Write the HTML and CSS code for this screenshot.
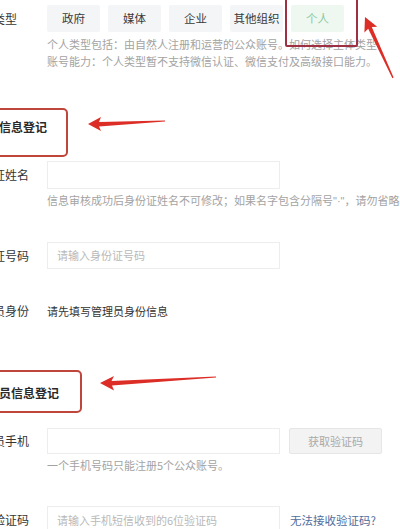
FILE: index.html
```html
<!DOCTYPE html>
<html lang="zh-CN">
<head>
<meta charset="utf-8">
<title>主体信息登记</title>
<link rel="stylesheet" href="styles.css">
</head>
<body>
<div class="page">
  <div class="row type-row">
    <div class="label lh27">主体类型</div>
    <div class="field">
      <div class="options">
        <div class="opt">政府</div>
        <div class="opt">媒体</div>
        <div class="opt">企业</div>
        <div class="opt">其他组织</div>
        <div class="opt on">个人</div>
      </div>
      <div class="hint type-hint">个人类型包括：由自然人注册和运营的公众账号。如何选择主体类型<br>账号能力：个人类型暂不支持微信认证、微信支付及高级接口能力。</div>
    </div>
  </div>

  <div class="heading h1">主体信息登记</div>

  <div class="row name-row">
    <div class="label lh28">身份证姓名</div>
    <div class="field">
      <div class="input h28"></div>
      <div class="hint name-hint">信息审核成功后身份证姓名不可修改；如果名字包含分隔号<span class="narrow">"·"</span>，请勿省略。</div>
    </div>
  </div>

  <div class="row id-row">
    <div class="label lh27">身份证号码</div>
    <div class="field">
      <div class="input h27">请输入身份证号码</div>
    </div>
  </div>

  <div class="row admin-row">
    <div class="label lh20">管理员身份</div>
    <div class="value">请先填写管理员身份信息</div>
  </div>

  <div class="heading h2">管理员信息登记</div>

  <div class="row phone-row">
    <div class="label lh26">管理员手机</div>
    <div class="field">
      <div class="line">
        <div class="input h26"></div>
        <div class="btn">获取验证码</div>
      </div>
      <div class="hint phone-hint">一个手机号码只能注册5个公众账号。</div>
    </div>
  </div>

  <div class="row code-row">
    <div class="label lh28">短信验证码</div>
    <div class="field">
      <div class="line">
        <div class="input h28">请输入手机短信收到的6位验证码</div>
        <div class="link">无法接收验证码?</div>
      </div>
    </div>
  </div>

  <div class="mark-box"></div>
  <svg class="arrows" width="400" height="529" viewBox="0 0 400 529">
    <polygon fill="#dc2e26" points="88,124 101,117 99,122 165,120.4 165,121.6 99,126.5 101,131"/>
    <polygon fill="#dc2e26" points="100,383 114,376 111.5,381 216,376.4 216,377.6 112,385.5 114,390.5"/>
    <polygon fill="#dc2e26" points="365,17 377.2,26.8 371.8,27.1 393.6,77.6 392.4,78.2 368.2,28.7 364.4,32.6"/>
  </svg>
</div>
</body>
</html>
```

FILE: styles.css
```css
html, body {
  margin: 0;
  padding: 0;
  background: #ffffff;
}

.page {
  position: relative;
  width: 400px;
  height: 529px;
  overflow: hidden;
  font-family: "Noto Sans CJK SC", "Noto Sans", sans-serif;
  color: #333;
}

.row {
  display: flex;
  align-items: flex-start;
}

.label {
  flex: none;
  width: 78px;
  margin-left: -31px;
  font-size: 12px;
  color: #353535;
  white-space: nowrap;
}

.lh20 { line-height: 20px; }
.lh26 { line-height: 26px; }
.lh27 { line-height: 27px; }
.lh28 { line-height: 28px; }

.field {
  display: flex;
  flex-direction: column;
}

.type-row { margin-top: 5px; }

.options {
  display: flex;
  gap: 8px;
}

.opt {
  width: 53px;
  height: 27px;
  line-height: 27px;
  text-align: center;
  font-size: 11.5px;
  background: #f4f5f6;
  color: #3a3a3a;
  border-radius: 2px;
}

.opt.on {
  background: #eef7f0;
  color: #88c99c;
}

.hint {
  font-size: 11px;
  line-height: 17px;
  color: #a3a3a3;
  white-space: nowrap;
}

.narrow {
  font-family: "Liberation Sans", sans-serif;
}

.type-hint { margin-top: 4px; }
.name-hint { margin-top: 3px; }
.phone-hint { margin-top: 3px; }

.heading {
  width: fit-content;
  margin-left: -40px;
  padding-left: 13px;
  border: 2px solid #c0463c;
  border-radius: 5px;
  font-size: 12px;
  font-weight: 700;
  line-height: 20px;
  color: #2a2a2a;
  white-space: nowrap;
}

.h1 {
  margin-top: 38px;
  padding-top: 7px;
  padding-bottom: 18px;
  padding-right: 19px;
}

.h2 {
  margin-top: 49px;
  padding-top: 11px;
  padding-bottom: 8px;
  padding-right: 21px;
}

.name-row { margin-top: 4px; }
.id-row { margin-top: 32px; }
.admin-row { margin-top: 32px; }
.phone-row { margin-top: 15px; }
.code-row { margin-top: 32px; }

.input {
  box-sizing: border-box;
  width: 233px;
  border: 1px solid #ededed;
  background: #fff;
  padding-left: 9px;
  font-size: 11px;
  color: #b9b9b9;
  white-space: nowrap;
}

.h26 { height: 26px; line-height: 24px; }
.h27 { height: 27px; line-height: 25px; }
.h28 { height: 28px; line-height: 26px; }

.value {
  font-size: 11px;
  line-height: 20px;
  color: #333;
  white-space: nowrap;
}

.line {
  display: flex;
  align-items: center;
}

.btn {
  box-sizing: border-box;
  margin-left: 9px;
  width: 93px;
  height: 26px;
  line-height: 24px;
  text-align: center;
  font-size: 11px;
  color: #a9a9a9;
  background: #f3f3f3;
  border: 1px solid #e6e6e6;
  border-radius: 2px;
}

.link {
  margin-left: 10px;
  font-size: 11.5px;
  color: #4f6d9e;
  white-space: nowrap;
}

.mark-box {
  position: absolute;
  left: 285px;
  top: -3px;
  width: 69px;
  height: 46px;
  border: 2px solid #9e3043;
  border-radius: 2px;
}

.arrows {
  position: absolute;
  left: 0;
  top: 0;
  pointer-events: none;
}
```
